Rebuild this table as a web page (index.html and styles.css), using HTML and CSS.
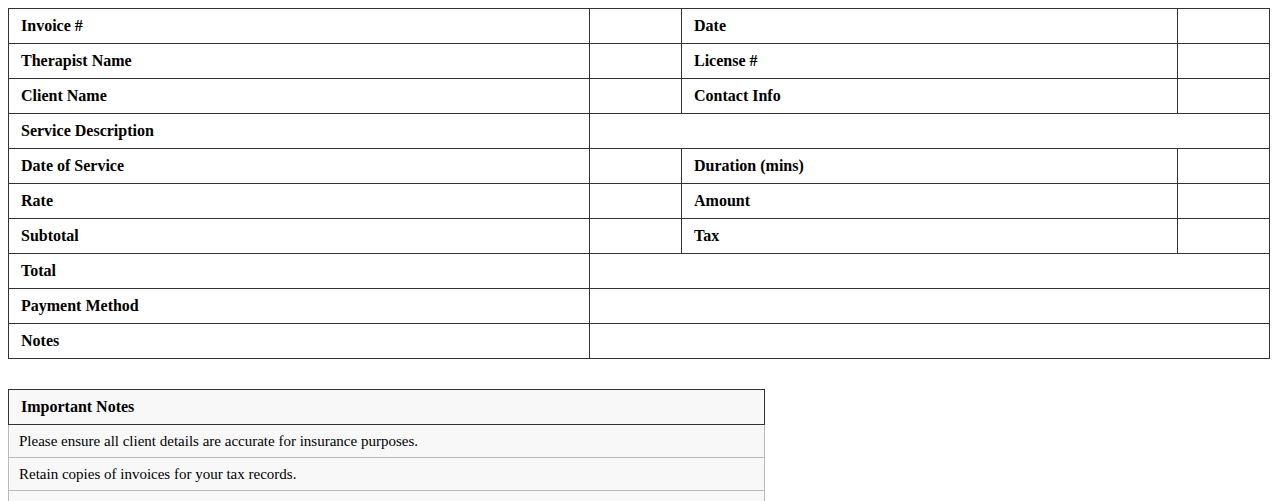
FILE: index.html
```html
<!DOCTYPE html>
<html>
<head>
<meta charset="utf-8">
<link rel="stylesheet" href="styles.css">
</head>
<body>
<table class="invoice">
  <colgroup>
    <col class="c-label"><col class="c-val"><col class="c-label2"><col class="c-val">
  </colgroup>
  <tr><th>Invoice #</th><td></td><th>Date</th><td></td></tr>
  <tr><th>Therapist Name</th><td></td><th>License #</th><td></td></tr>
  <tr><th>Client Name</th><td></td><th>Contact Info</th><td></td></tr>
  <tr><th>Service Description</th><td colspan="3"></td></tr>
  <tr><th>Date of Service</th><td></td><th>Duration (mins)</th><td></td></tr>
  <tr><th>Rate</th><td></td><th>Amount</th><td></td></tr>
  <tr><th>Subtotal</th><td></td><th>Tax</th><td></td></tr>
  <tr><th>Total</th><td colspan="3"></td></tr>
  <tr><th>Payment Method</th><td colspan="3"></td></tr>
  <tr><th>Notes</th><td colspan="3"></td></tr>
</table>

<table class="notes">
  <tr><th>Important Notes</th></tr>
  <tr><td>Please ensure all client details are accurate for insurance purposes.</td></tr>
  <tr><td>Retain copies of invoices for your tax records.</td></tr>
  <tr><td class="empty"></td></tr>
</table>
</body>
</html>
```
FILE: styles.css
```css
body {
  margin: 8px;
  font-family: "Liberation Serif", "Times New Roman", serif;
  font-size: 16px;
  color: #000;
  background: #fff;
}

table {
  border-collapse: collapse;
}

.invoice {
  width: 100%;
  table-layout: fixed;
}

.c-label { width: 581px; }
.c-val { width: 92px; }
.c-label2 { width: 496px; }

.invoice th,
.invoice td {
  border: 1px solid #333;
  padding: 8px 12px;
  height: 18px;
  text-align: left;
  font-weight: bold;
  line-height: 18px;
}

.notes {
  width: 60%;
  margin-top: 30px;
  background: #f8f8f8;
}

.notes th {
  border: 1px solid #333;
  padding: 8px 12px;
  text-align: left;
  font-weight: bold;
  line-height: 18px;
}

.notes td {
  border: 1px solid #bbb;
  padding: 8px 10px;
  font-size: 15px;
  line-height: 16px;
}

.notes td.empty {
  height: 16px;
}
```
